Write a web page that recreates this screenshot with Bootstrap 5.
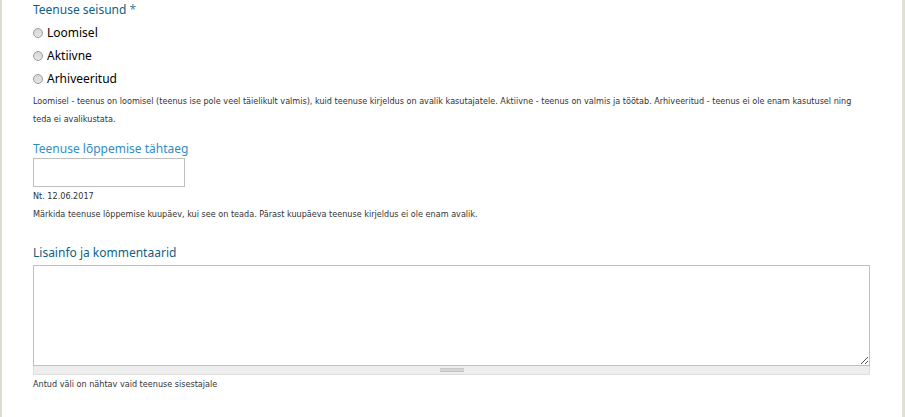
<!DOCTYPE html>
<html lang="et">
<head>
<meta charset="utf-8">
<meta name="viewport" content="width=device-width, initial-scale=1">
<title>Teenuse seisund</title>
<link href="https://cdn.jsdelivr.net/npm/bootstrap@5.3.0/dist/css/bootstrap.min.css" rel="stylesheet">
<style>
body { font-family: "Noto Sans", "Open Sans", sans-serif; font-size: 12px; line-height: 18px; color: #000; background: #fff; }
.page-frame { border-left: 2px solid #dcdccf; border-right: 3px solid #dfdfd3; padding: 1px 32px 24px 31px; }
.field-label { font-size: 12px; line-height: 18px; color: #0f5f87; margin: 0; padding: 0; float: none; }
.field-label.date-label { color: #2f8dc6; }
.required-mark { color: #4d7f99; }
.option-row { height: 23px; gap: 4px; }
.option-row input { appearance: none; width: 10px; height: 10px; margin: 0; border: 1px solid #9b9b9b; border-radius: 50%; background: linear-gradient(#d8d8d8, #e6e6e6); }
.option-row input:checked { background: radial-gradient(#444 35%, #e4e4e4 40%); }
.help-text { font-family: "DejaVu Sans Condensed", "DejaVu Sans", sans-serif; font-size: 9px; line-height: 18px; color: #333; margin: 0; }
.date-input { width: 152px; height: 29px; border: 1px solid #c0c0c0; padding: 2px 6px; }
.notes-box { height: 101px; border: 1px solid #c0c0c0; padding: 2px 6px; resize: none; }
.notes-wrap .resize-mark { right: 2px; bottom: 2px; }
.grip-bar { height: 9px; background: #eee; border: 1px solid #ddd; border-top: 0; }
.grip-handle { width: 24px; height: 4px; background: #d5d5d5; border-top: 1px solid #c8c8c8; border-bottom: 1px solid #c5c5c5; }
.state-group { margin-bottom: 12px; }
.date-group { margin-bottom: 21px; }
.options-list { padding: 2px 0 2px; }
.notes-label { margin-bottom: 3px; }
</style>
</head>
<body>
<main class="page-frame min-vh-100">
  <form>
    <fieldset class="state-group">
      <legend class="field-label">Teenuse seisund <span class="required-mark">*</span></legend>
      <div class="options-list">
        <div class="option-row d-flex align-items-center"><input type="radio" name="state" id="state-new"><label for="state-new">Loomisel</label></div>
        <div class="option-row d-flex align-items-center"><input type="radio" name="state" id="state-active"><label for="state-active">Aktiivne</label></div>
        <div class="option-row d-flex align-items-center"><input type="radio" name="state" id="state-archived"><label for="state-archived">Arhiveeritud</label></div>
      </div>
      <p class="help-text">Loomisel - teenus on loomisel (teenus ise pole veel täielikult valmis), kuid teenuse kirjeldus on avalik kasutajatele. Aktiivne - teenus on valmis ja töötab. Arhiveeritud - teenus ei ole enam kasutusel ning teda ei avalikustata.</p>
    </fieldset>
    <div class="date-group">
      <label class="field-label date-label d-block" for="end-date">Teenuse lõppemise tähtaeg</label>
      <input class="date-input d-block" type="text" id="end-date">
      <p class="help-text">Nt. 12.06.2017</p>
      <p class="help-text">Märkida teenuse lõppemise kuupäev, kui see on teada. Pärast kuupäeva teenuse kirjeldus ei ole enam avalik.</p>
    </div>
    <div>
      <label class="field-label notes-label d-block" for="notes">Lisainfo ja kommentaarid</label>
      <div class="notes-wrap position-relative">
        <textarea class="notes-box d-block w-100" id="notes"></textarea>
        <svg class="resize-mark position-absolute" width="7" height="7" viewBox="0 0 7 7" shape-rendering="crispEdges" aria-hidden="true"><path fill="#555" d="M0 6h1v1h-1zM1 5h1v1h-1zM2 4h1v1h-1zM3 3h1v1h-1zM4 2h1v1h-1zM5 1h1v1h-1zM6 0h1v1h-1zM4 6h1v1h-1zM5 5h1v1h-1zM6 4h1v1h-1z"/></svg>
      </div>
      <div class="grip-bar d-flex align-items-center justify-content-center"><span class="grip-handle"></span></div>
      <p class="help-text">Antud väli on nähtav vaid teenuse sisestajale</p>
    </div>
  </form>
</main>
<script src="https://cdn.jsdelivr.net/npm/bootstrap@5.3.0/dist/js/bootstrap.bundle.min.js"></script>
</body>
</html>
